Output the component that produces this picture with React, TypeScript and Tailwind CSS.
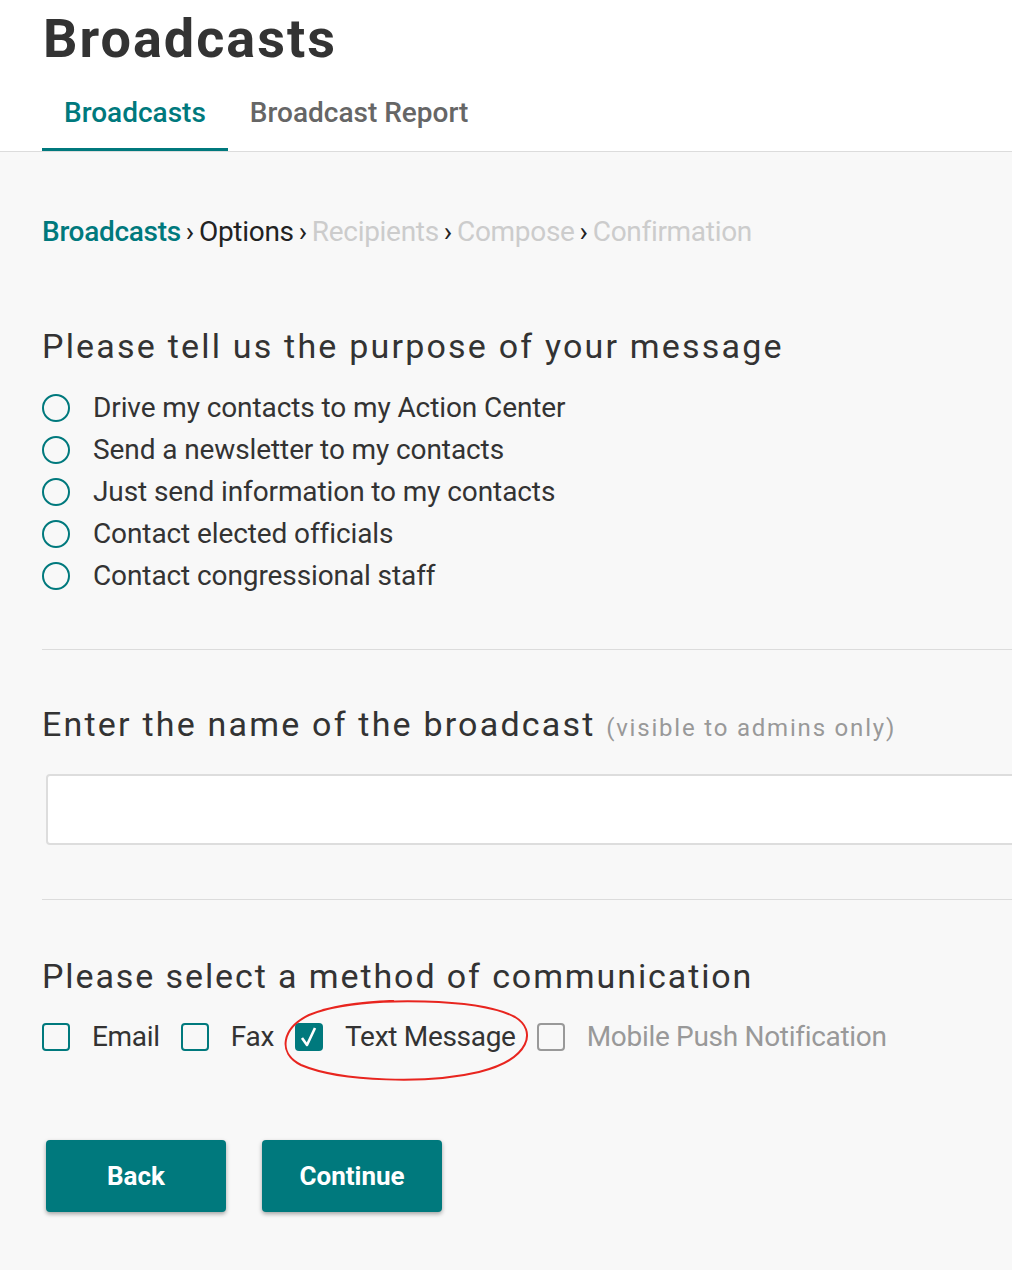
const TEAL = "text-[#00797d]";

const purposes = [
  "Drive my contacts to my Action Center",
  "Send a newsletter to my contacts",
  "Just send information to my contacts",
  "Contact elected officials",
  "Contact congressional staff",
];

const Radio = ({ label }: { label: string }) => (
  <label className="flex h-[42px] items-center gap-[23px]">
    <span className="h-[28px] w-[28px] shrink-0 rounded-full border-2 border-[#00797d]" />
    <span className="text-[28px] leading-[34px] tracking-[-0.1px] text-[#333]">{label}</span>
  </label>
);

const Checkbox = ({
  label,
  checked = false,
  disabled = false,
}: {
  label: string;
  checked?: boolean;
  disabled?: boolean;
}) => (
  <label className="flex items-center gap-[22px]">
    {checked ? (
      <span className="flex h-[28px] w-[28px] items-center justify-center rounded-[4px] bg-[#00797d]">
        <svg width="18" height="22" viewBox="0 0 18 22" fill="none">
          <path d="M2 12 L7 19 L15 2" stroke="white" strokeWidth="2.6" strokeLinejoin="round" />
        </svg>
      </span>
    ) : (
      <span
        className={
          "h-[28px] w-[28px] rounded-[4px] border-2 " +
          (disabled ? "border-[#999]" : "border-[#00797d]")
        }
      />
    )}
    <span
      className={
        "text-[28px] leading-[34px] tracking-[-0.3px] " + (disabled ? "text-[#999]" : "text-[#333]")
      }
    >
      {label}
    </span>
  </label>
);

const Divider = ({ className = "" }: { className?: string }) => (
  <div className={"border-t border-[#dcdcdc] " + className} />
);

export default function App() {
  return (
    <div className="min-h-[1270px] overflow-hidden bg-[#f8f8f8] font-['Roboto',sans-serif]">
      <header className="border-b border-[#dcdcdc] bg-white">
        <h1 className="pl-[43px] pt-[12px] text-[54px] font-bold leading-[54px] tracking-[2px] text-[#333]">
          Broadcasts
        </h1>
        <nav className="mt-[11px] flex pl-[42px]">
          <a
            className={
              "border-b-[3px] border-[#00797d] px-[22px] pb-[18px] pt-[19px] text-[28px] font-medium leading-[34px] " +
              TEAL
            }
          >
            Broadcasts
          </a>
          <a className="px-[22px] pb-[18px] pt-[19px] text-[28px] font-medium leading-[34px] text-[#666]">
            Broadcast Report
          </a>
        </nav>
      </header>

      <main className="pl-[42px] pt-[63px]">
        <div className="flex items-center gap-[5px] text-[28px] leading-[34px] tracking-[-0.3px]">
          <span className={"font-medium " + TEAL}>Broadcasts</span>
          <span className="text-[#222]">›</span>
          <span className="text-[#222]">Options</span>
          <span className="text-[#222]">›</span>
          <span className="text-[#ccc]">Recipients</span>
          <span className="text-[#222]">›</span>
          <span className="text-[#ccc]">Compose</span>
          <span className="text-[#222]">›</span>
          <span className="text-[#ccc]">Confirmation</span>
        </div>

        <h2 className="mt-[76px] text-[34px] leading-[42px] tracking-[2.2px] text-[#333]">
          Please tell us the purpose of your message
        </h2>
        <div className="mt-[20px] flex flex-col">
          {purposes.map((p) => (
            <Radio key={p} label={p} />
          ))}
        </div>

        <Divider className="mt-[52px]" />

        <h2 className="mt-[53px] text-[34px] leading-[42px] tracking-[2.2px] text-[#333]">
          Enter the name of the broadcast{" "}
          <span className="text-[24px] tracking-[1.8px] text-[#999]">(visible to admins only)</span>
        </h2>
        <input
          type="text"
          className="ml-[4px] mt-[25px] block h-[71px] w-[1000px] rounded-[4px] border-2 border-[#ddd] bg-white"
        />

        <Divider className="mt-[54px]" />

        <h2 className="mt-[55px] text-[34px] leading-[42px] tracking-[1.9px] text-[#333]">
          Please select a method of communication
        </h2>
        <div className="relative mt-[19px] flex h-[42px] items-center gap-[21px]">
          <Checkbox label="Email" />
          <Checkbox label="Fax" />
          <Checkbox label="Text Message" checked />
          <Checkbox label="Mobile Push Notification" disabled />
          <svg
            className="pointer-events-none absolute left-[237px] top-[-19px]"
            width="256"
            height="86"
            viewBox="0 0 256 86"
            fill="none"
          >
            <path
              d="M44 13 C 95 0, 200 1, 236 20 C 258 33, 252 62, 200 75 C 150 87, 62 85, 22 68 C -2 56, 3 31, 30 18 C 52 9, 82 5, 114 4"
              stroke="#e8251f"
              strokeWidth="2"
              strokeLinecap="round"
            />
          </svg>
        </div>

        <div className="ml-[4px] mt-[82px] flex gap-[36px] pb-[58px]">
          <button className="h-[72px] w-[180px] rounded-[4px] bg-[#00797d] text-[26px] font-bold text-white shadow-[0_2px_4px_rgba(0,0,0,0.35)]">
            Back
          </button>
          <button className="h-[72px] w-[180px] rounded-[4px] bg-[#00797d] text-[26px] font-bold text-white shadow-[0_2px_4px_rgba(0,0,0,0.35)]">
            Continue
          </button>
        </div>
      </main>
    </div>
  );
}
